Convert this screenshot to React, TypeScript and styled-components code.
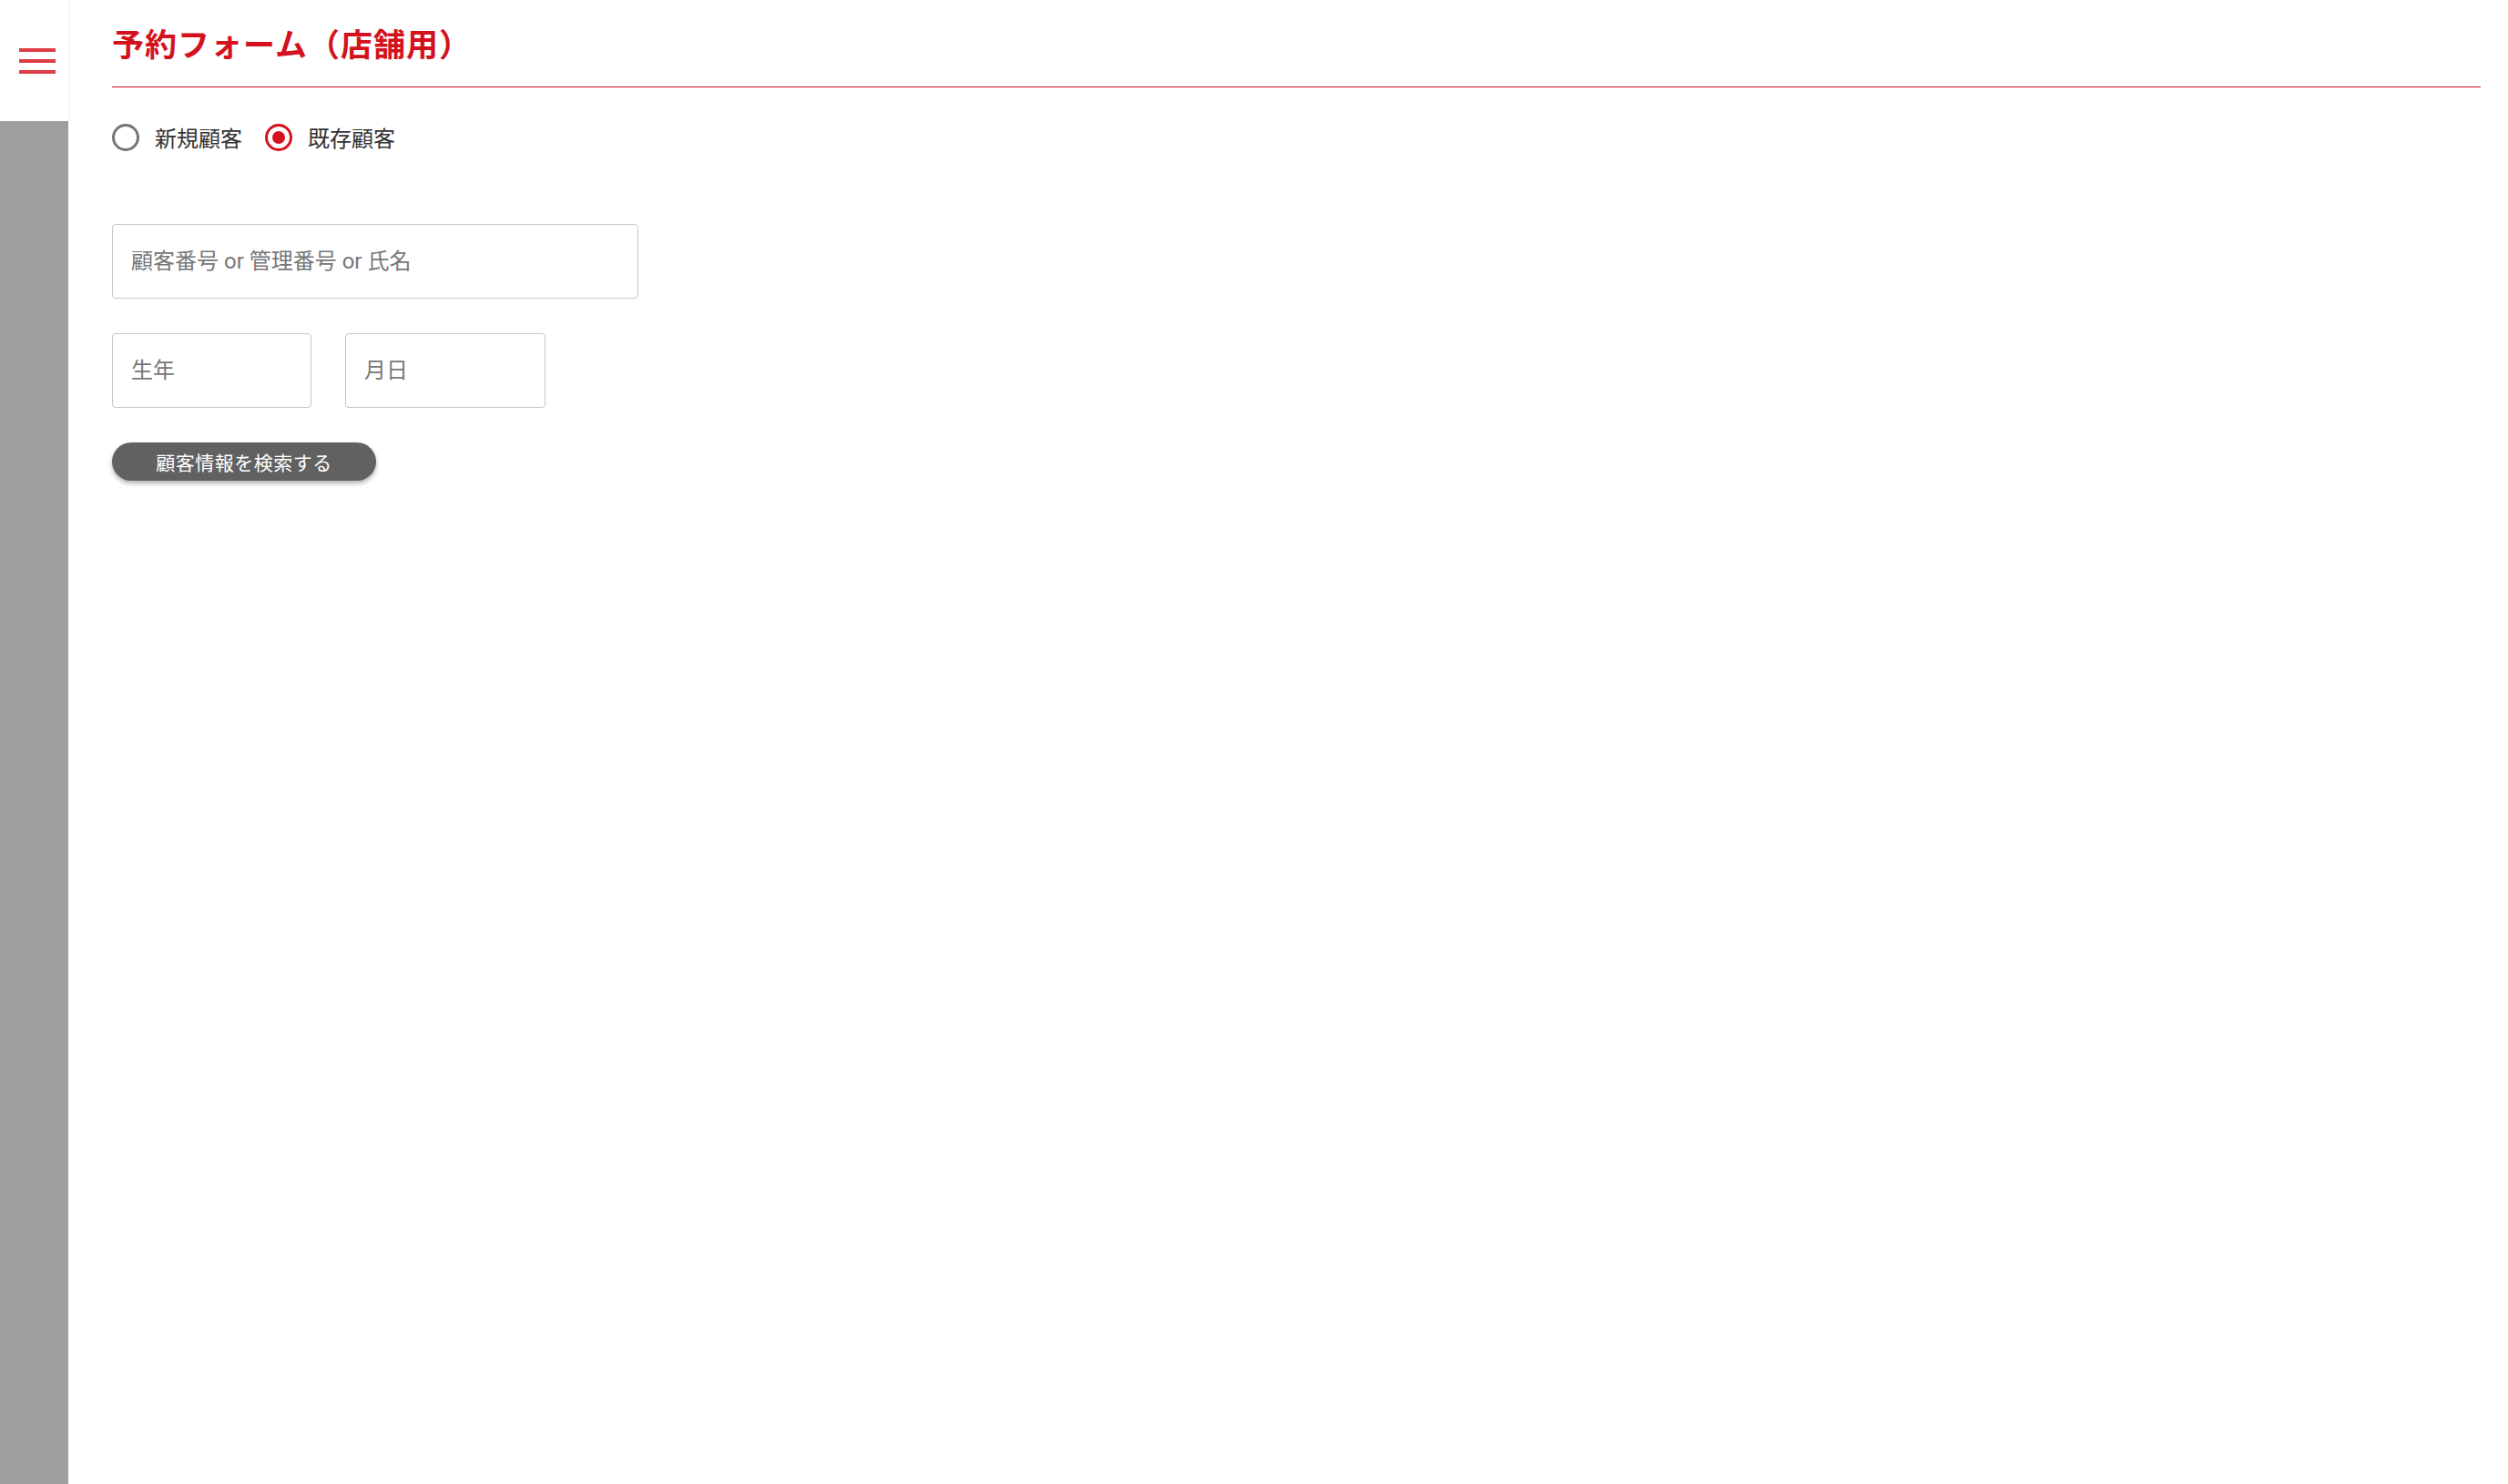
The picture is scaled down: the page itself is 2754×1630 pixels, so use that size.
import React, { useState } from "react";
import styled, { createGlobalStyle } from "styled-components";

const GlobalStyle = createGlobalStyle`
  html, body { margin: 0; padding: 0; background: #ffffff; }
  body { font-family: Roboto, "Noto Sans CJK JP", sans-serif; color: #333333; }
  * { box-sizing: border-box; }
`;

const Page = styled.div`
  display: flex;
  min-height: 1630px;
  width: 100%;
`;

const Sidebar = styled.aside`
  width: 75px;
  flex: 0 0 75px;
  display: flex;
  flex-direction: column;
`;

const SidebarTop = styled.div`
  height: 133px;
  background: #ffffff;
  display: flex;
  align-items: center;
  padding-left: 21px;
  box-shadow: 1px 0 2px rgba(0, 0, 0, 0.06);
`;

const SidebarRest = styled.div`
  flex: 1;
  background: #9e9e9e;
`;

const MenuButton = styled.button`
  border: 0;
  background: transparent;
  padding: 0;
  width: 40px;
  display: flex;
  flex-direction: column;
  gap: 8px;
  cursor: pointer;
`;

const MenuLine = styled.span`
  display: block;
  width: 40px;
  height: 4px;
  background: #df3d46;
`;

const Main = styled.main`
  flex: 1;
  padding: 0 30px 0 48px;
`;

const Header = styled.header`
  height: 96px;
  display: flex;
  align-items: center;
  border-bottom: 1.5px solid #cf1420;
  padding-bottom: 2px;
`;

const Title = styled.h1`
  margin: 0;
  font-family: "Noto Sans CJK JP", sans-serif;
  font-size: 35px;
  font-weight: 700;
  color: #d3121e;
  letter-spacing: 1px;
`;

const RadioGroup = styled.div`
  display: flex;
  align-items: center;
  margin-top: 40px;
  height: 30px;
`;

const RadioLabel = styled.label`
  display: flex;
  align-items: center;
  margin-right: 25px;
  cursor: pointer;
  font-family: "Noto Sans CJK JP", sans-serif;
  font-size: 24px;
  line-height: 30px;
  color: #333333;
`;

const RadioCircle = styled.span<{ $checked: boolean }>`
  width: 30px;
  height: 30px;
  border-radius: 50%;
  border: 3px solid ${(p) => (p.$checked ? "#d3121e" : "#757575")};
  display: flex;
  align-items: center;
  justify-content: center;
  margin-right: 17px;
  &::after {
    content: "";
    width: 14px;
    height: 14px;
    border-radius: 50%;
    background: #d3121e;
    display: ${(p) => (p.$checked ? "block" : "none")};
  }
`;

const HiddenRadio = styled.input`
  position: absolute;
  opacity: 0;
  width: 0;
  height: 0;
`;

const Fields = styled.div`
  margin-top: 80px;
  display: flex;
  flex-direction: column;
  gap: 38px;
`;

const Row = styled.div`
  display: flex;
  gap: 37px;
`;

const TextInput = styled.input<{ $width: number }>`
  width: ${(p) => p.$width}px;
  height: 82px;
  border: 1px solid #c6c6c6;
  border-radius: 4px;
  padding: 0 20px;
  font-family: Roboto, "Noto Sans CJK JP", sans-serif;
  font-size: 24px;
  color: #333333;
  outline: none;
  background: #ffffff;
  &::placeholder {
    color: #777777;
  }
`;

const SearchButton = styled.button`
  width: 290px;
  height: 42px;
  border: 0;
  border-radius: 21px;
  background: #616161;
  color: #ffffff;
  font-family: "Noto Sans CJK JP", sans-serif;
  font-size: 21px;
  letter-spacing: 0.5px;
  box-shadow: 0 3px 5px rgba(0, 0, 0, 0.3);
  cursor: pointer;
  padding: 0;
`;

export default function App() {
  const [kind, setKind] = useState<"new" | "existing">("existing");
  return (
    <>
      <GlobalStyle />
      <Page>
        <Sidebar>
          <SidebarTop>
            <MenuButton aria-label="menu">
              <MenuLine />
              <MenuLine />
              <MenuLine />
            </MenuButton>
          </SidebarTop>
          <SidebarRest />
        </Sidebar>
        <Main>
          <Header>
            <Title>予約フォーム（店舗用）</Title>
          </Header>
          <RadioGroup>
            <RadioLabel>
              <HiddenRadio
                type="radio"
                name="kind"
                checked={kind === "new"}
                onChange={() => setKind("new")}
              />
              <RadioCircle $checked={kind === "new"} />
              新規顧客
            </RadioLabel>
            <RadioLabel>
              <HiddenRadio
                type="radio"
                name="kind"
                checked={kind === "existing"}
                onChange={() => setKind("existing")}
              />
              <RadioCircle $checked={kind === "existing"} />
              既存顧客
            </RadioLabel>
          </RadioGroup>
          <Fields>
            <TextInput $width={578} placeholder="顧客番号 or 管理番号 or 氏名" />
            <Row>
              <TextInput $width={219} placeholder="生年" />
              <TextInput $width={220} placeholder="月日" />
            </Row>
            <div>
              <SearchButton>顧客情報を検索する</SearchButton>
            </div>
          </Fields>
        </Main>
      </Page>
    </>
  );
}
